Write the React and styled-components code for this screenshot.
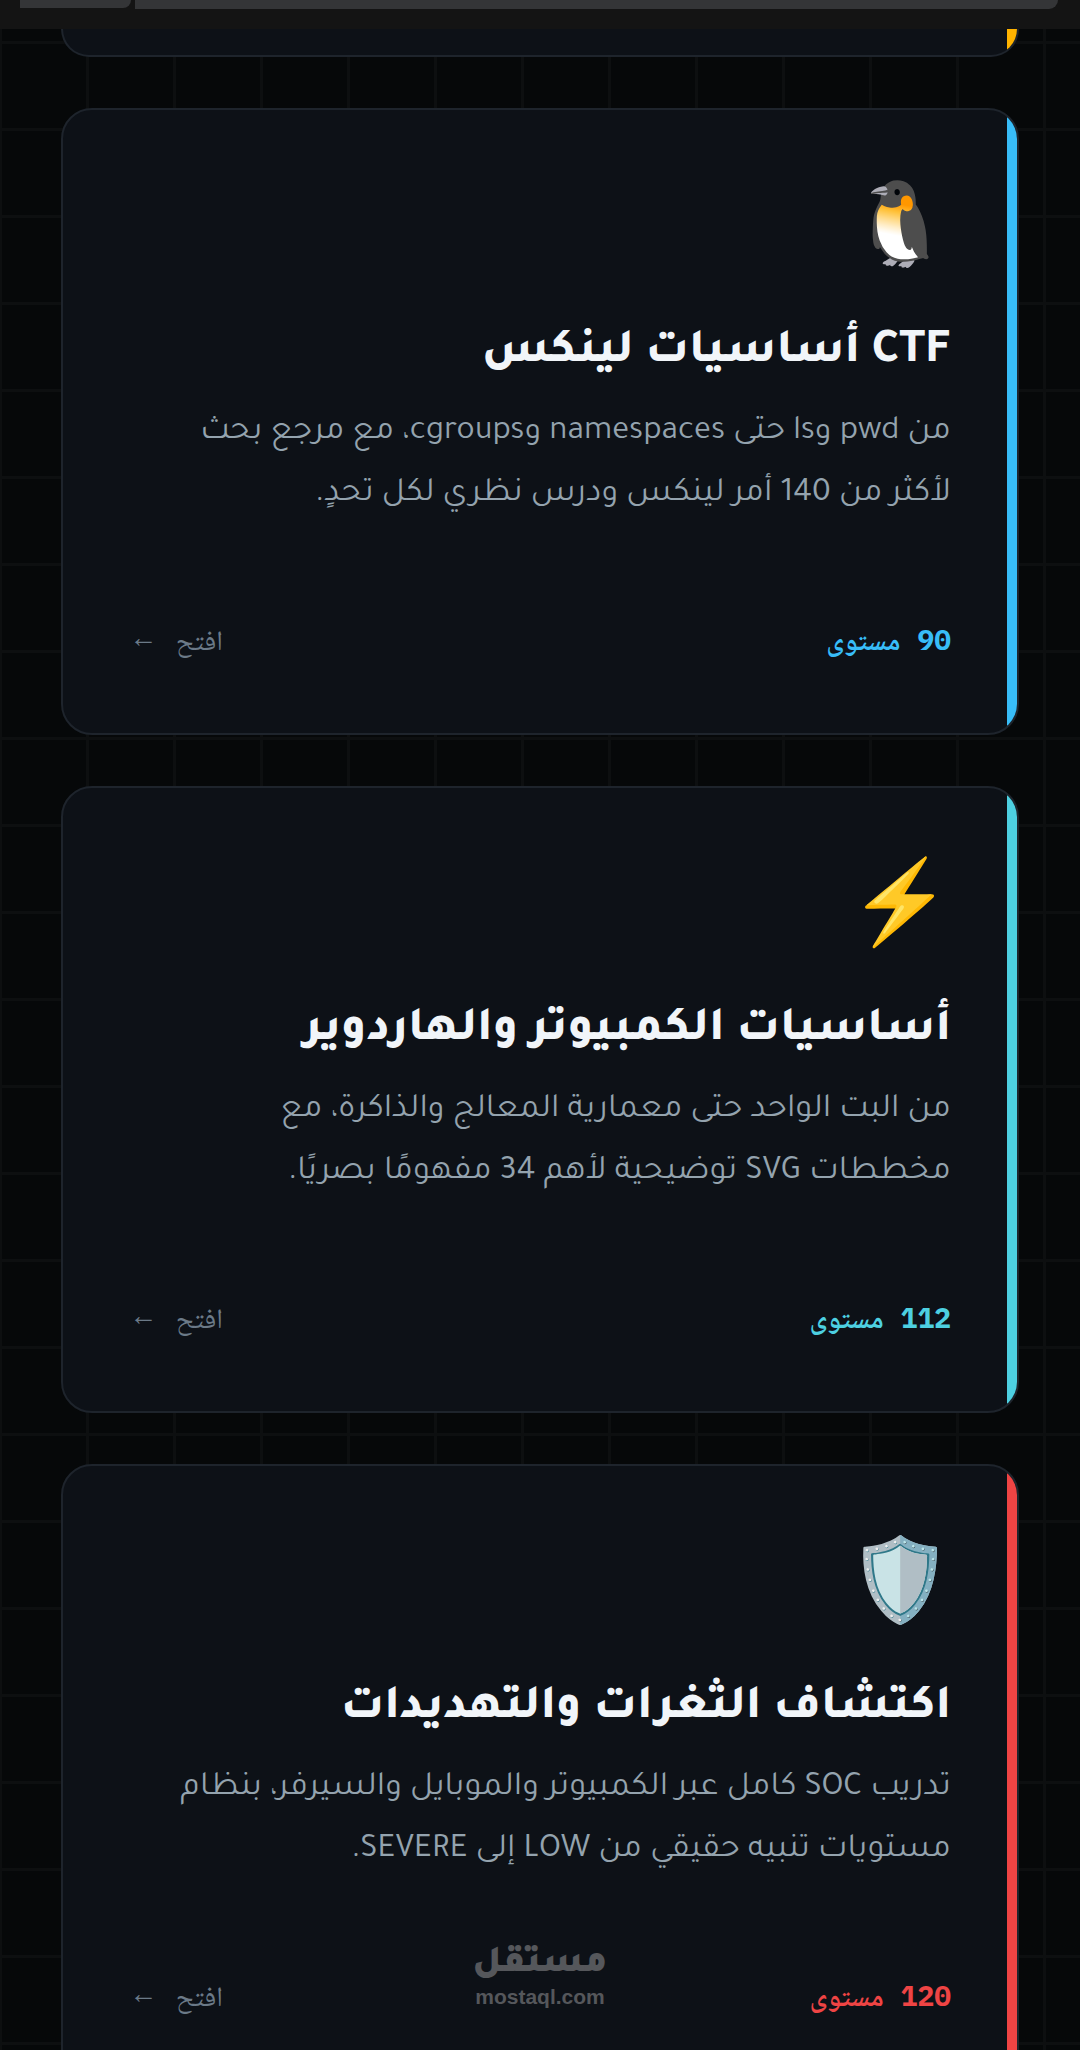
import styled, { createGlobalStyle } from 'styled-components';

const GlobalStyle = createGlobalStyle`
  * {
    box-sizing: border-box;
  }

  body {
    margin: 0;
    background-color: #060809;
    font-family: Tajawal, 'Noto Sans', sans-serif;
  }

  h2,
  p {
    margin: 0;
  }
`;

const Page = styled.div`
  position: relative;
  display: flex;
  flex-direction: column;
  width: 100%;
  height: 100vh;
  overflow: hidden;
  background-color: #060809;
  background-image: linear-gradient(to right, #0d0f10 3px, transparent 3px),
    linear-gradient(to bottom, #0d0f10 3px, transparent 3px);
  background-size: 87px 87px;
  background-position: -1px 41px;
`;

const BrowserBar = styled.header`
  display: flex;
  flex-shrink: 0;
  gap: 4px;
  height: 29px;
  padding: 0 22px 0 20px;
  background-color: #141414;
`;

const TabPill = styled.div`
  width: 111px;
  height: 8px;
  border-radius: 0 0 14px 0;
  background-color: #343537;
`;

const AddressPill = styled.div`
  flex: 1;
  height: 9px;
  border-radius: 0 0 18px 0;
  background-color: #343537;
`;

const CardList = styled.main`
  display: flex;
  flex-direction: column;
  gap: 51px;
  padding: 0 61px;
`;

const Card = styled.article`
  position: relative;
  display: flex;
  flex-direction: column;
  flex-shrink: 0;
  min-height: 627px;
  padding: 66px;
  border: 2px solid #1e242c;
  border-radius: 31px;
  background-color: #0d1117;
  overflow: hidden;

  &::before {
    content: '';
    position: absolute;
    top: 0;
    right: 0;
    bottom: 0;
    width: 10px;
    background-color: ${({ $accent }) => $accent};
  }
`;

const PreviousCard = styled(Card)`
  min-height: 28px;
  padding: 0;
  border-top: 0;
  border-radius: 0 0 31px 31px;
`;

const Emoji = styled.span`
  height: 96px;
  font-family: 'Noto Color Emoji', sans-serif;
  font-size: 82px;
  line-height: 96px;
`;

const Title = styled.h2`
  margin-top: 52px;
  font-size: 48px;
  font-weight: 800;
  color: #f1f5f9;
  line-height: 60px;
`;

const Description = styled.p`
  margin-top: 18px;
  padding-left: 24px;
  font-size: 34px;
  font-weight: 400;
  color: #94a3ae;
  line-height: 62px;
`;

const CardFooter = styled.div`
  display: flex;
  align-items: center;
  justify-content: space-between;
  margin-top: auto;
  font-family: 'IBM Plex Mono', 'Liberation Mono', 'Noto Naskh Arabic', monospace;
  font-size: 28px;
  line-height: 54px;
`;

const Levels = styled.span`
  font-weight: 700;
  color: ${({ $accent }) => $accent};
`;

const OpenLink = styled.a`
  display: flex;
  gap: 24px;
  padding-left: 6px;
  color: #6b7a88;
  text-decoration: none;
`;

const Arrow = styled.span`
  font-family: 'Liberation Mono', monospace;
`;

const Watermark = styled.div`
  position: absolute;
  bottom: 40px;
  left: 475px;
  display: flex;
  flex-direction: column;
  align-items: center;
  width: 130px;
  color: #55575b;
`;

const WatermarkName = styled.span`
  font-size: 38px;
  font-weight: 900;
  line-height: 36px;
`;

const WatermarkSite = styled.span`
  font-family: 'Liberation Sans', sans-serif;
  font-size: 21px;
  font-weight: 700;
  line-height: 26px;
`;

const courses = [
  {
    id: 'linux',
    emoji: '🐧',
    title: 'CTF أساسيات لينكس',
    description:
      'من pwd وls حتى namespaces وcgroups، مع مرجع بحث لأكثر من 140 أمر لينكس ودرس نظري لكل تحدٍ.',
    levels: 90,
    accent: '#38bdf8',
  },
  {
    id: 'hardware',
    emoji: '⚡',
    title: 'أساسيات الكمبيوتر والهاردوير',
    description:
      'من البت الواحد حتى معمارية المعالج والذاكرة، مع مخططات SVG توضيحية لأهم 34 مفهومًا بصريًا.',
    levels: 112,
    accent: '#4dd0e1',
  },
  {
    id: 'threats',
    emoji: '🛡️',
    title: 'اكتشاف الثغرات والتهديدات',
    description:
      'تدريب SOC كامل عبر الكمبيوتر والموبايل والسيرفر، بنظام مستويات تنبيه حقيقي من LOW إلى SEVERE.',
    levels: 120,
    accent: '#ef4444',
  },
];

function App() {
  return (
    <Page>
      <GlobalStyle />
      <BrowserBar>
        <TabPill />
        <AddressPill />
      </BrowserBar>
      <CardList dir='rtl' lang='ar'>
        <PreviousCard $accent='#ffb300' />
        {courses.map((course) => (
          <Card key={course.id} $accent={course.accent}>
            <Emoji>{course.emoji}</Emoji>
            <Title>{course.title}</Title>
            <Description>{course.description}</Description>
            <CardFooter>
              <Levels $accent={course.accent}>{course.levels} مستوى</Levels>
              <OpenLink href={`#${course.id}`}>
                افتح <Arrow>←</Arrow>
              </OpenLink>
            </CardFooter>
          </Card>
        ))}
      </CardList>
      <Watermark>
        <WatermarkName lang='ar'>مستقل</WatermarkName>
        <WatermarkSite>mostaql.com</WatermarkSite>
      </Watermark>
    </Page>
  );
}

export default App;
